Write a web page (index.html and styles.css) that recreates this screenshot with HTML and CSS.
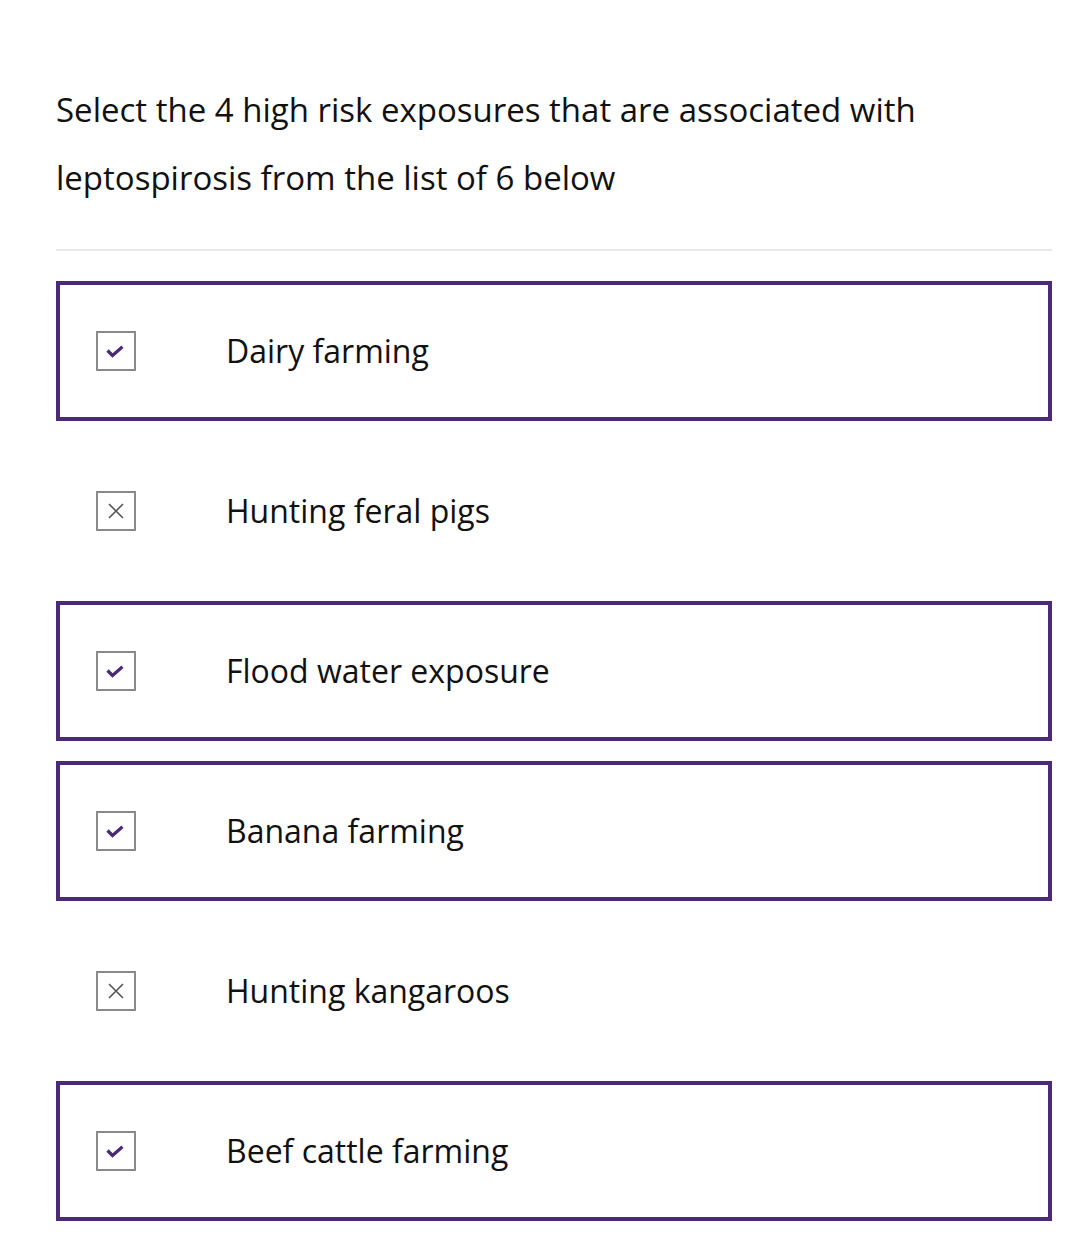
FILE: index.html
```html
<!DOCTYPE html>
<html lang="en">
<head>
<meta charset="utf-8">
<title>Leptospirosis exposures</title>
<link rel="stylesheet" href="styles.css">
</head>
<body>
<main class="page">
  <p class="question">Select the 4 high risk exposures that are associated with leptospirosis from the list of 6 below</p>
  <hr class="divider">
  <ul class="options">
    <li class="option selected">
      <span class="box"><svg class="tick" viewBox="0 0 18 13"><path d="M1.5 5.5 L6.5 10.5 L16.5 1.8" fill="none" stroke="#4b2a7b" stroke-width="3.2"/></svg></span>
      <span class="label">Dairy farming</span>
    </li>
    <li class="option">
      <span class="box"><svg class="cross" viewBox="0 0 16 16"><path d="M1 1 L15 15 M15 1 L1 15" fill="none" stroke="#555" stroke-width="1.6"/></svg></span>
      <span class="label">Hunting feral pigs</span>
    </li>
    <li class="option selected">
      <span class="box"><svg class="tick" viewBox="0 0 18 13"><path d="M1.5 5.5 L6.5 10.5 L16.5 1.8" fill="none" stroke="#4b2a7b" stroke-width="3.2"/></svg></span>
      <span class="label">Flood water exposure</span>
    </li>
    <li class="option selected">
      <span class="box"><svg class="tick" viewBox="0 0 18 13"><path d="M1.5 5.5 L6.5 10.5 L16.5 1.8" fill="none" stroke="#4b2a7b" stroke-width="3.2"/></svg></span>
      <span class="label">Banana farming</span>
    </li>
    <li class="option">
      <span class="box"><svg class="cross" viewBox="0 0 16 16"><path d="M1 1 L15 15 M15 1 L1 15" fill="none" stroke="#555" stroke-width="1.6"/></svg></span>
      <span class="label">Hunting kangaroos</span>
    </li>
    <li class="option selected">
      <span class="box"><svg class="tick" viewBox="0 0 18 13"><path d="M1.5 5.5 L6.5 10.5 L16.5 1.8" fill="none" stroke="#4b2a7b" stroke-width="3.2"/></svg></span>
      <span class="label">Beef cattle farming</span>
    </li>
  </ul>
</main>
</body>
</html>
```
FILE: styles.css
```css
html, body {
  margin: 0;
  padding: 0;
  background: #ffffff;
}
body {
  font-family: "Open Sans", "Noto Sans", sans-serif;
  color: #111111;
}
.page {
  padding: 76px 32px 20px 56px;
}
.question {
  margin: 0;
  font-size: 33px;
  line-height: 68px;
  max-width: 940px;
}
.divider {
  border: none;
  height: 2px;
  background: #e8e8e8;
  margin: 37px 0 30px 0;
}
.options {
  list-style: none;
  margin: 0;
  padding: 0;
  display: flex;
  flex-direction: column;
  gap: 20px;
}
.option {
  box-sizing: border-box;
  height: 140px;
  border: 4px solid transparent;
  display: flex;
  align-items: center;
  padding-left: 36px;
}
.option.selected {
  border-color: #4b2a7b;
}
.box {
  box-sizing: border-box;
  width: 40px;
  height: 40px;
  border: 2px solid #8a8a8a;
  display: flex;
  align-items: center;
  justify-content: center;
  flex-shrink: 0;
}
.tick {
  display: block;
  width: 18px;
  height: 13px;
  flex-shrink: 0;
  margin-right: 2px;
}
.cross {
  display: block;
  width: 16px;
  height: 16px;
  flex-shrink: 0;
}
.label {
  margin-left: 90px;
  font-size: 32px;
  line-height: 40px;
}
```
